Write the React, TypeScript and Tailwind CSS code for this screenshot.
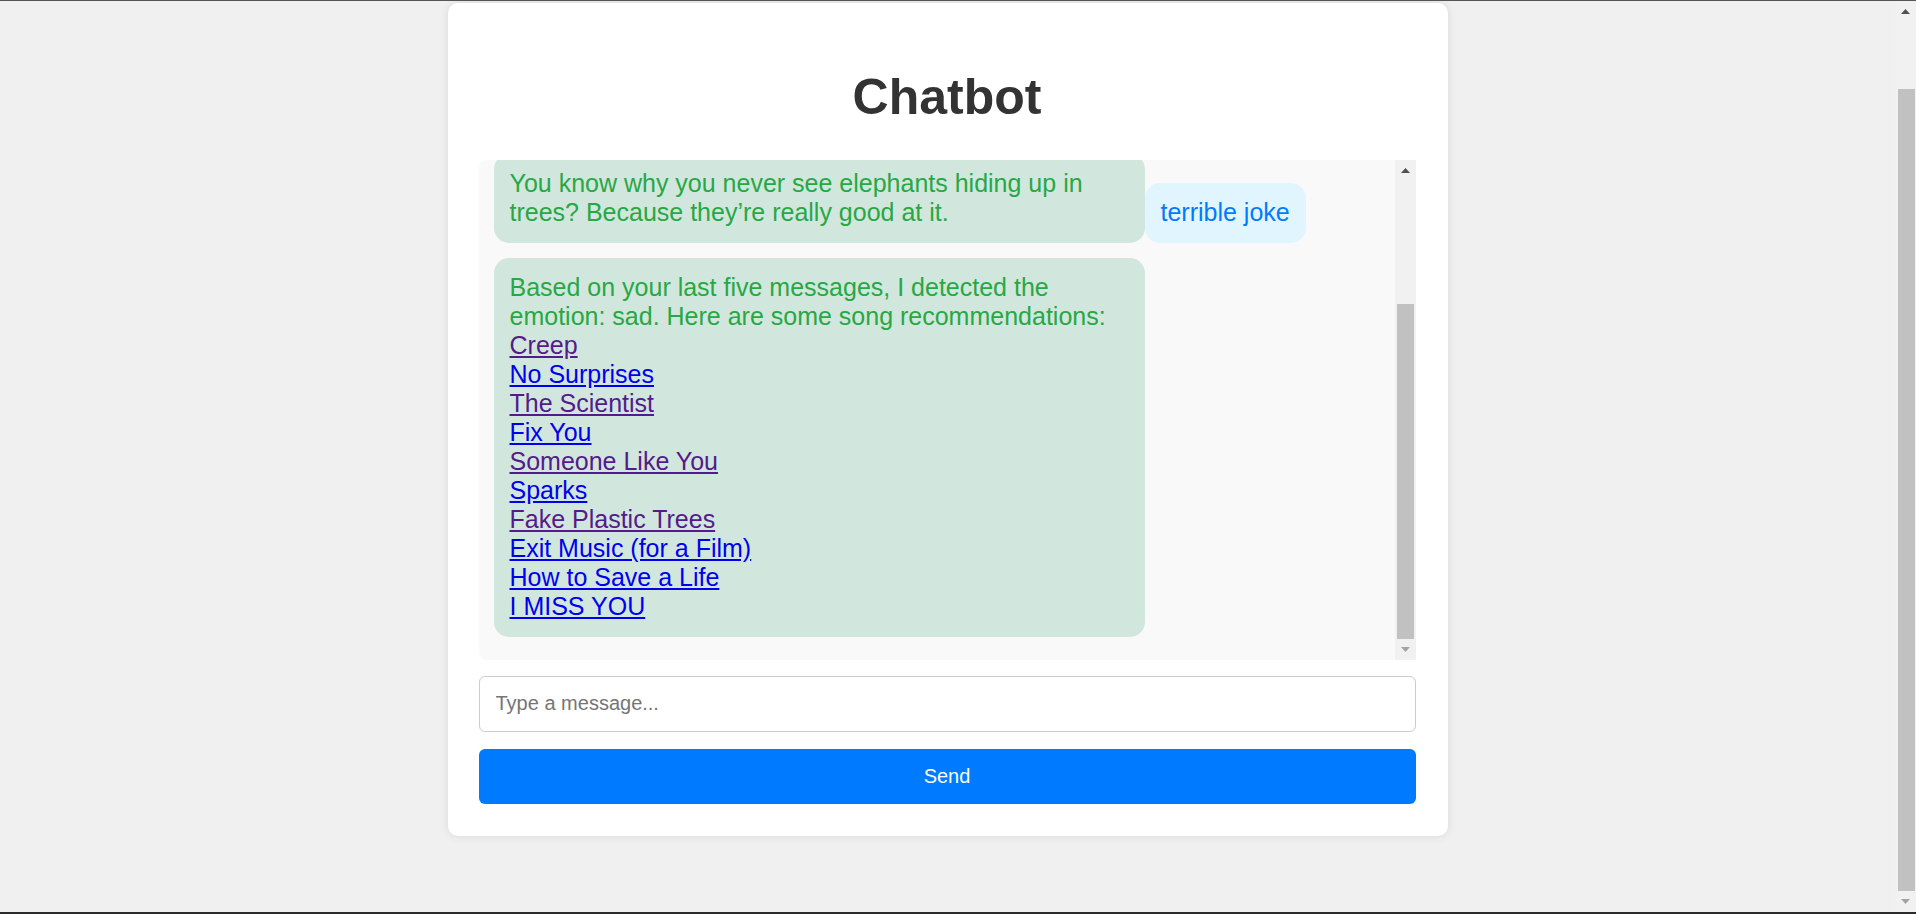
type Song = { title: string; visited: boolean };
type Msg = { from: "bot" | "user"; text: string; songs?: Song[] };

const messages: Msg[] = [
  {
    from: "bot",
    text: "You know why you never see elephants hiding up in trees? Because they’re really good at it.",
  },
  { from: "user", text: "terrible joke" },
  {
    from: "bot",
    text: "Based on your last five messages, I detected the emotion: sad. Here are some song recommendations:",
    songs: [
      { title: "Creep", visited: true },
      { title: "No Surprises", visited: false },
      { title: "The Scientist", visited: true },
      { title: "Fix You", visited: false },
      { title: "Someone Like You", visited: true },
      { title: "Sparks", visited: false },
      { title: "Fake Plastic Trees", visited: true },
      { title: "Exit Music (for a Film)", visited: false },
      { title: "How to Save a Life", visited: false },
      { title: "I MISS YOU", visited: false },
    ],
  },
];

function Bubble({ msg }: { msg: Msg }) {
  const isBot = msg.from === "bot";
  return (
    <div
      className={
        isBot
          ? "max-w-[651px] my-[7.5px] px-[16px] py-[15.5px] rounded-[15px] bg-[#d1e7dd] text-[#28a745] text-[25px] leading-[29px]"
          : "max-w-[651px] my-[7.5px] px-[16px] py-[15.5px] rounded-[15px] bg-[#e1f5fe] text-[#007bff] text-[25px] leading-[29px]"
      }
    >
      {msg.text}
      {msg.songs &&
        msg.songs.map((s) => (
          <span key={s.title}>
            <br />
            <a href="#" className={s.visited ? "underline text-[#551a8b]" : "underline text-[#0000ee]"}>
              {s.title}
            </a>
          </span>
        ))}
    </div>
  );
}

function Arrow({ up, dark }: { up: boolean; dark: boolean }) {
  return (
    <svg width="9" height="5" viewBox="0 0 9 5">
      <polygon points={up ? "0,5 9,5 4.5,0" : "0,0 9,0 4.5,5"} fill={dark ? "#505050" : "#a3a3a3"} />
    </svg>
  );
}

// classic scrollbar look, drawn next to the content
function Scrollbar({ offset, thumbClass }: { offset: string; thumbClass: string }) {
  return (
    <div className="w-[21px] shrink-0 flex flex-col bg-[#f1f1f1]">
      <div className="h-[21px] flex items-center justify-center">
        <Arrow up dark />
      </div>
      <div className={"flex-1 flex flex-col " + offset}>
        <div className={"flex-1 bg-[#c1c1c1] " + thumbClass} />
      </div>
      <div className="h-[21px] flex items-center justify-center">
        <Arrow up={false} dark={false} />
      </div>
    </div>
  );
}

export default function App() {
  return (
    <div className="h-screen flex bg-[#f0f0f0] border-t border-t-[#555] border-b-2 border-b-[#2b2b2b] font-['Liberation_Sans',Arial,sans-serif] overflow-hidden">
      <div className="flex-1 min-w-0 overflow-hidden pt-[2px]">
        <div className="w-[1000px] mx-auto bg-white rounded-[10px] shadow-[0_0_10px_rgba(0,0,0,0.1)] pl-[31px] pr-[32px] pt-[32px] pb-[32px]">
          <h1 className="mt-[33.5px] mb-[33.5px] text-center text-[50px] leading-[57.5px] font-bold text-[#333]">
            Chatbot
          </h1>

          <div className="h-[500px] flex bg-[#f9f9f9] rounded-l-lg">
            <div className="flex-1 min-w-0 overflow-hidden rounded-l-lg flex flex-col justify-end px-[15px] pb-[15.5px]">
              <div className="flex flex-wrap items-end">
                {messages.map((m, i) => (
                  <Bubble key={i} msg={m} />
                ))}
              </div>
            </div>
            <Scrollbar offset="pt-[123px]" thumbClass="mx-[2px]" />
          </div>

          <input
            type="text"
            placeholder="Type a message..."
            className="block w-full mt-[16px] h-[56px] px-[16px] border border-[#ccc] rounded-[6px] text-[20px] text-[#333] placeholder:text-[#757575] outline-none bg-white"
          />

          <button className="block w-full mt-[17px] h-[55px] rounded-[6px] bg-[#007bff] text-white text-[20px]">
            Send
          </button>
        </div>
      </div>
      <Scrollbar offset="pt-[67px]" thumbClass="ml-[3px] mr-[1px]" />
    </div>
  );
}
